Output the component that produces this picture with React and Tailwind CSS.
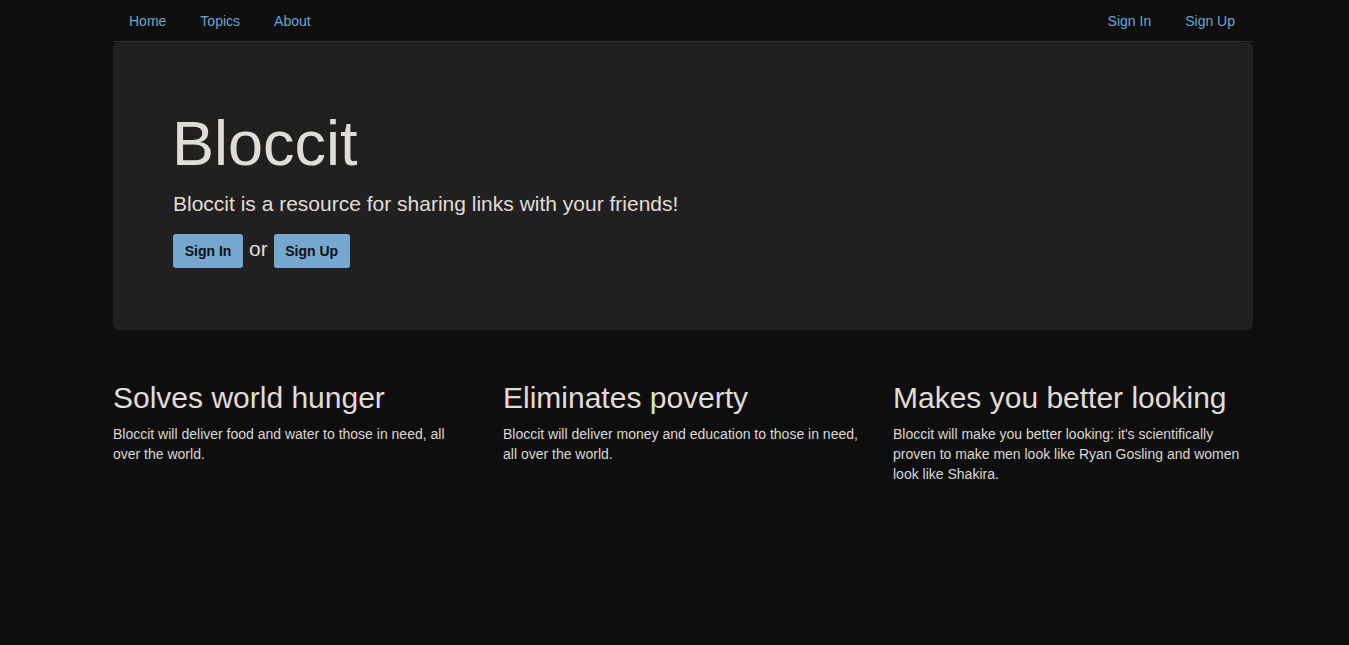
export default function App() {
  const font = { fontFamily: '"Liberation Sans", Arial, sans-serif' };
  const features = [
    {
      title: "Solves world hunger",
      body: "Bloccit will deliver food and water to those in need, all over the world.",
    },
    {
      title: "Eliminates poverty",
      body: "Bloccit will deliver money and education to those in need, all over the world.",
    },
    {
      title: "Makes you better looking",
      body: "Bloccit will make you better looking: it's scientifically proven to make men look like Ryan Gosling and women look like Shakira.",
    },
  ];
  return (
    <div className="min-h-[645px] bg-[#0e0e0e] text-[#e0ddd8] pl-[17px]" style={font}>
      <div className="w-[1140px] mx-auto">
        <nav className="h-[42px] pt-[2px] flex items-center justify-between border-b border-[#2f2f2f] text-[14px] text-[#6fa5d0]">
          <div className="flex items-center pl-[16px] gap-[34px]">
            <a>Home</a>
            <a>Topics</a>
            <a>About</a>
          </div>
          <div className="flex items-center pr-[18px] gap-[34px]">
            <a>Sign In</a>
            <a>Sign Up</a>
          </div>
        </nav>
        <div className="bg-[#202020] rounded-[6px] h-[288px] px-[60px] pt-[66px]">
          <h1 className="text-[63px] leading-[70px] text-[#e0ddd8] -ml-[1px]">Bloccit</h1>
          <p className="text-[21px] leading-[30px] mt-[11px] text-[#e0ddd8]">
            Bloccit is a resource for sharing links with your friends!
          </p>
          <div className="flex items-center mt-[15px] gap-[6px]">
            <button className="h-[34px] w-[70px] rounded-[3px] bg-[#75a7d0] text-[#0f0f0f] font-bold text-[14px]">
              Sign In
            </button>
            <span className="text-[21px] leading-[30px] -mt-[4px]">or</span>
            <button className="h-[34px] w-[76px] rounded-[3px] bg-[#75a7d0] text-[#0f0f0f] font-bold text-[14px]">
              Sign Up
            </button>
          </div>
        </div>
        <div className="grid grid-cols-3 gap-[30px] mt-[50px]">
          {features.map((f) => (
            <div key={f.title}>
              <h2 className="text-[30px] leading-[36px] text-[#e0ddd8]">{f.title}</h2>
              <p className="text-[14px] leading-[20px] mt-[8px] text-[#dcd9d4] pr-[4px]">{f.body}</p>
            </div>
          ))}
        </div>
      </div>
    </div>
  );
}
